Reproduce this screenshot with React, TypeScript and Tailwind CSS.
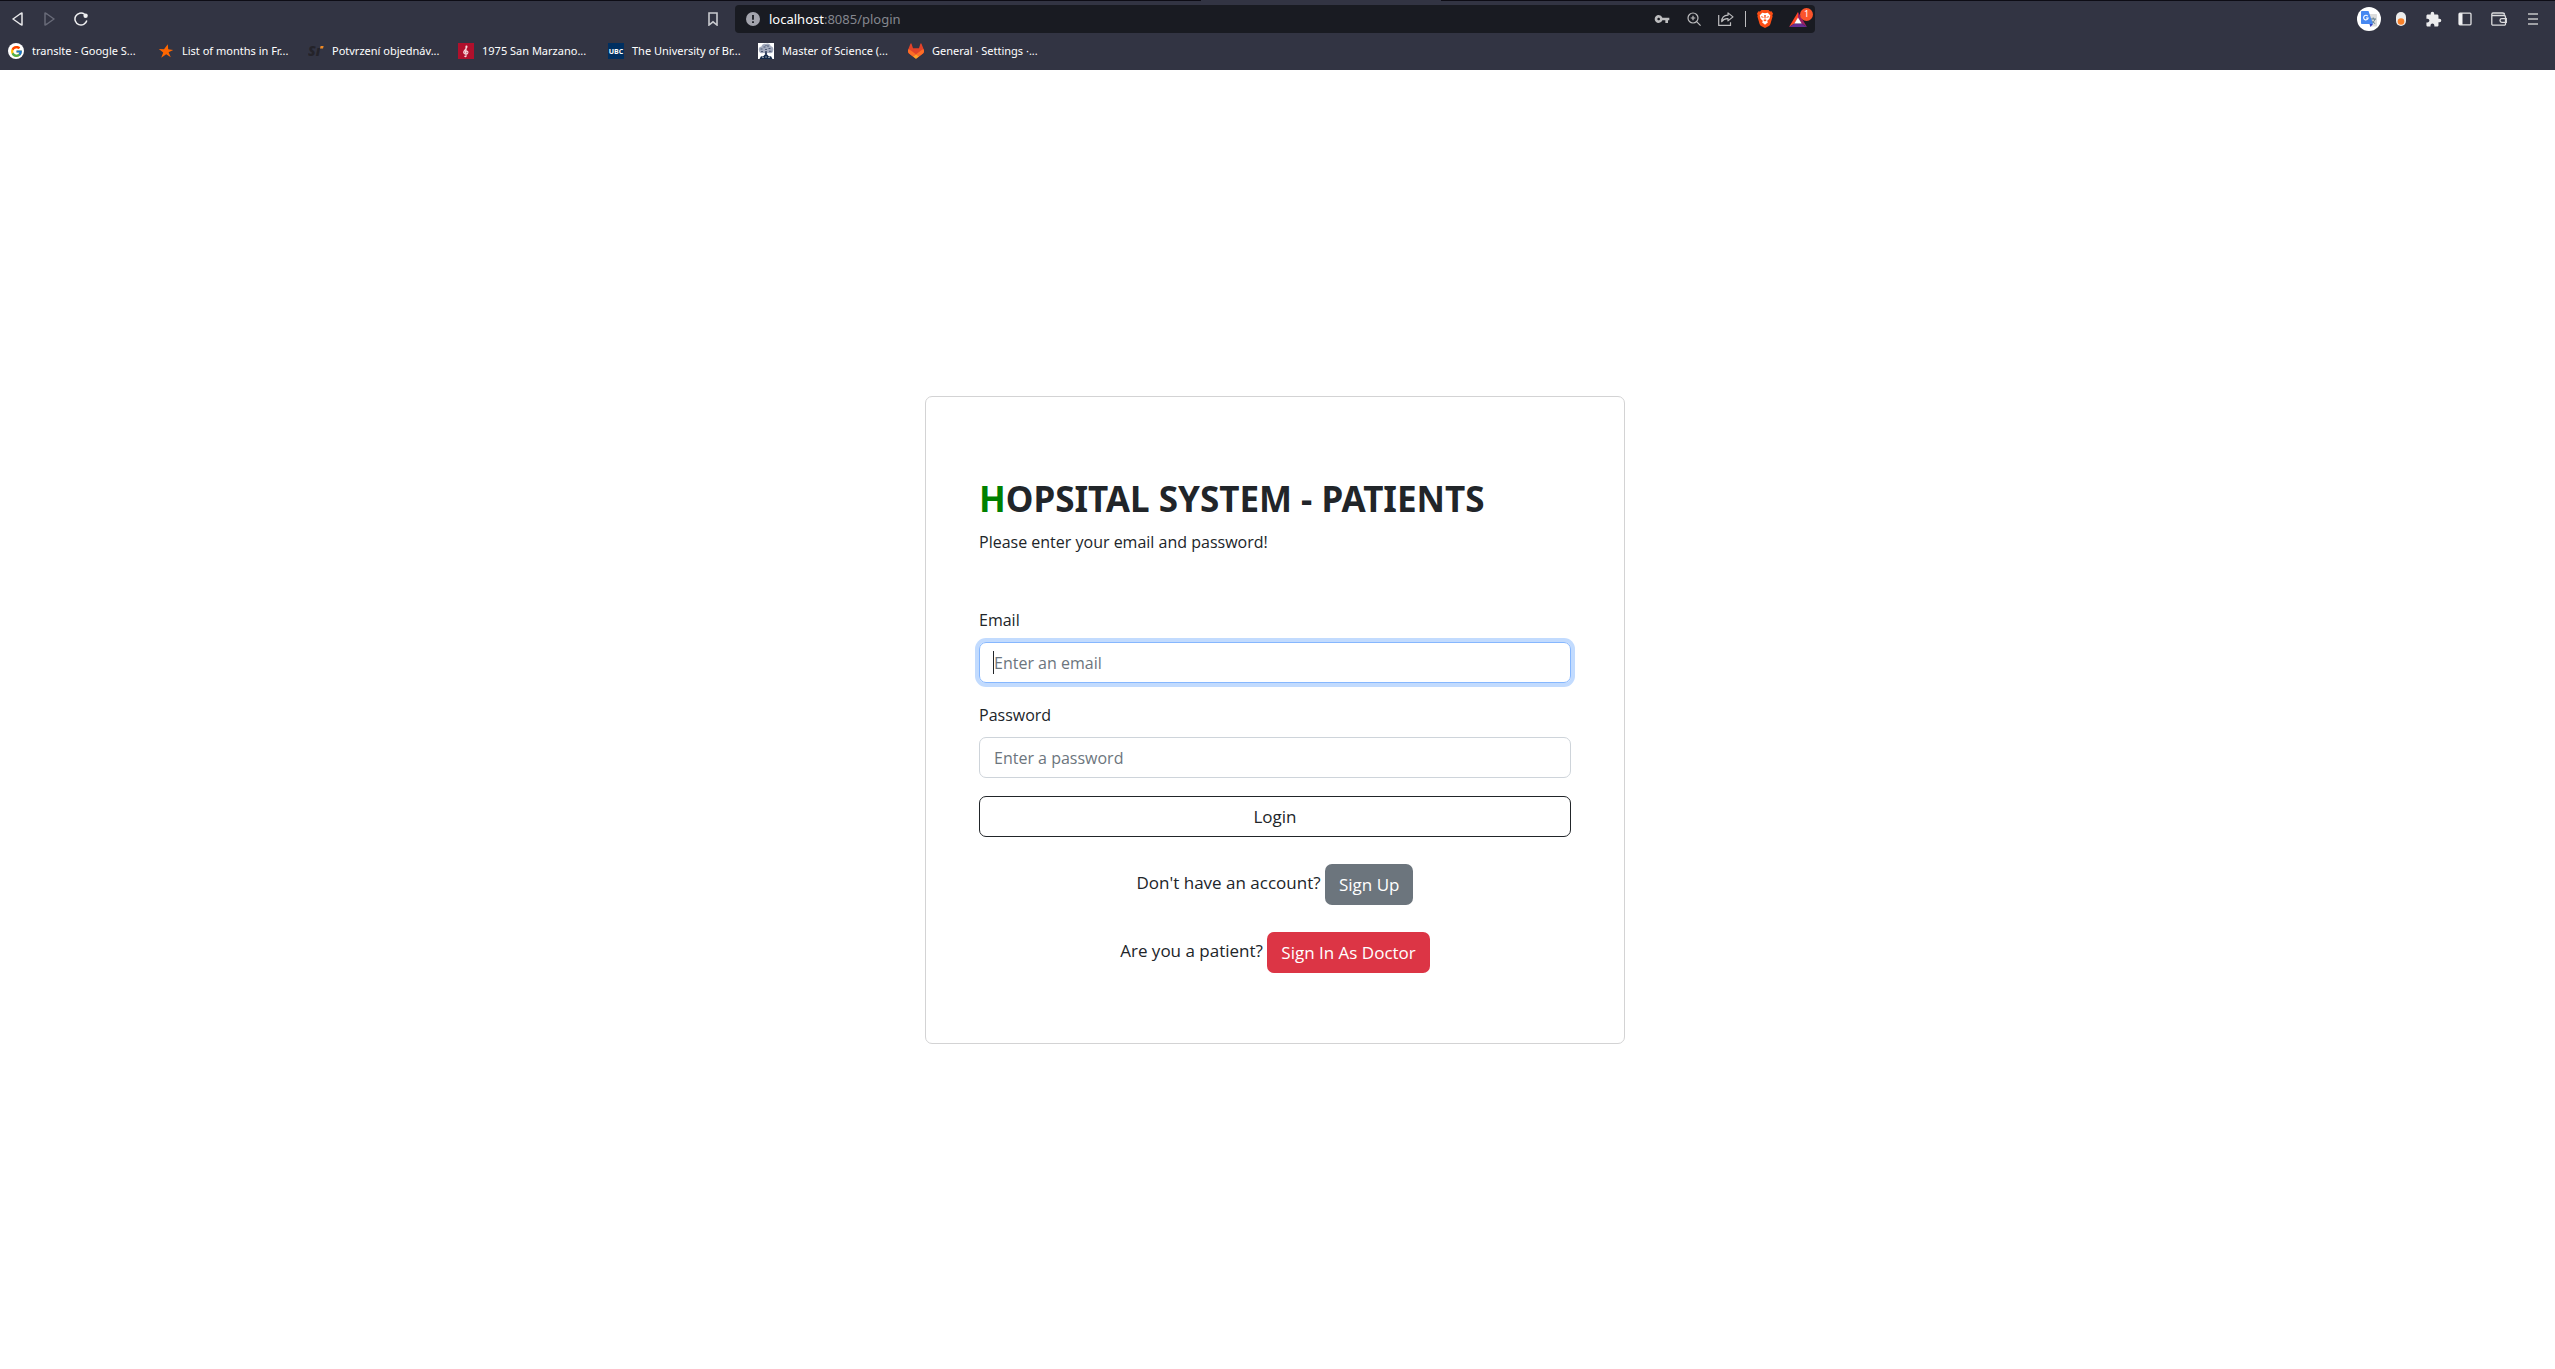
import React from "react";
import { FcGoogle } from "react-icons/fc";
import { MdExtension, MdVpnKey } from "react-icons/md";

function GoogleMark() {
  return (
    <span className="flex size-4 items-center justify-center rounded-full bg-white">
      <FcGoogle size={13} />
    </span>
  );
}

function StarMark() {
  return (
    <svg viewBox="0 0 16 16" className="size-4">
      <path d="M9.8 1.2l.4 5 5 .9-4.6 2.1 2.2 5-4.6-3-5 3.6 2-5.3L.8 6l5.2.2z" fill="#f60" />
    </svg>
  );
}

function SiMark() {
  return (
    <svg viewBox="0 0 16 16" className="size-4">
      <text x="0" y="13" fontFamily="Open Sans, sans-serif" fontSize="14" fontWeight="800" fontStyle="italic" fill="#24232a">
        Sı
      </text>
      <path d="M12.6 3h3l-.6 2.4h-3z" fill="#f08a24" />
    </svg>
  );
}

function ClefMark() {
  return (
    <svg viewBox="0 0 16 16" className="size-4">
      <rect width="16" height="16" fill="#b0102c" />
      <path
        d="M8 13.5V3.2c1-.8 1.4.8.4 2L6.2 7.8c-1.2 1.5-.4 3.4 1.8 3.4 2.2 0 2.7-2.9.6-3.2-1.6-.2-2 1.6-.8 2M8.200 13c-.3 1-1.6.8-1.5-.1"
        fill="none"
        stroke="#f6d9dd"
        strokeWidth="1.1"
      />
    </svg>
  );
}

function UbcMark() {
  return (
    <svg viewBox="0 0 16 16" className="size-4">
      <rect width="16" height="16" fill="#002f60" />
      <text x="8" y="11" textAnchor="middle" fontFamily="Open Sans, sans-serif" fontSize="7" fontWeight="700" fill="#fff">
        UBC
      </text>
    </svg>
  );
}

function TreeMark() {
  return (
    <svg viewBox="0 0 16 16" className="size-4">
      <rect width="16" height="16" fill="#fff" />
      <path d="M1 7.5C0 5 2 3.5 3.5 3.5 4 1 6.5.2 8 1c2-1 4.5 0 4.7 2.3C15 3.5 16 6 15 8c0 2-2.5 2.5-4 2H5c-2 .8-4-.5-4-2.5z" fill="#a3aabd" />
      <path d="M2.5 6h2M5.5 4h2M9 3h2M10.5 5.5h2M7 6.5h2M3 8.5h2M11 8.3h2.5M8 2v1" stroke="#4b5874" />
      <path d="M7.3 8h1.4l.6 4.5H6.700z" fill="#33415f" />
      <path d="M1.5 16L3 13.2l2 .3L6.5 12h3l1.5 1.5 2-.3 1.5 2.8z" fill="#122848" />
      <path d="M4.5 14.5h1M7.5 14h1M10.5 14.5h1" stroke="#fff" />
    </svg>
  );
}

function GitlabMark() {
  return (
    <svg viewBox="0 0 25 24" className="size-4">
      <path
        d="M24.507 9.5l-.034-.09L21.082.562a.896.896 0 0 0-1.694.091l-2.29 7.01H7.825L5.535.653a.898.898 0 0 0-1.694-.09L.451 9.411.416 9.5a6.297 6.297 0 0 0 2.09 7.278l.012.01.03.022 5.16 3.867 2.56 1.935 1.554 1.176a1.051 1.051 0 0 0 1.268 0l1.555-1.176 2.56-1.935 5.197-3.89.014-.01A6.297 6.297 0 0 0 24.507 9.5z"
        fill="#E24329"
      />
      <path
        d="M24.507 9.5l-.034-.09a11.44 11.44 0 0 0-4.56 2.051l-7.447 5.632 4.742 3.584 5.197-3.89.014-.01A6.297 6.297 0 0 0 24.507 9.5z"
        fill="#FC6D26"
      />
      <path
        d="M7.707 20.677l2.56 1.935 1.555 1.176a1.051 1.051 0 0 0 1.268 0l1.555-1.176 2.56-1.935-4.743-3.584-4.755 3.584z"
        fill="#FCA326"
      />
      <path
        d="M5.01 11.461a11.43 11.43 0 0 0-4.56-2.05L.416 9.5a6.297 6.297 0 0 0 2.09 7.278l.012.01.03.022 5.16 3.867 4.745-3.584-7.444-5.632z"
        fill="#FC6D26"
      />
    </svg>
  );
}

const bookmarks = [
  { label: "translte - Google S...", icon: <GoogleMark /> },
  { label: "List of months in Fr...", icon: <StarMark /> },
  { label: "Potvrzení objednáv...", icon: <SiMark /> },
  { label: "1975 San Marzano...", icon: <ClefMark /> },
  { label: "The University of Br...", icon: <UbcMark /> },
  { label: "Master of Science (...", icon: <TreeMark /> },
  { label: "General · Settings ·...", icon: <GitlabMark /> },
];

function Toolbar() {
  return (
    <div className="grid grid-cols-[1fr_minmax(0,1080px)_1fr] items-center pt-1 pr-[17px] pl-3">
      <div className="flex items-center">
        <button aria-label="Back" className="mr-[21px]">
          <svg viewBox="0 0 11 14" className="h-[14px] w-[11px]" fill="none" stroke="#e8e8ea" strokeWidth="1.5" strokeLinejoin="round">
            <path d="M10 1v12L8 12 1 7l7-5z" />
          </svg>
        </button>
        <button aria-label="Forward" className="mr-[19px]">
          <svg viewBox="0 0 11 14" className="h-[14px] w-[11px]" fill="none" stroke="#686a78" strokeWidth="1.5" strokeLinejoin="round">
            <path d="M1 1v12l2-1 7-5-7-5z" />
          </svg>
        </button>
        <button aria-label="Reload">
          <svg viewBox="0 0 14 14" className="size-[14px]" fill="none" stroke="#f0f0f2" strokeWidth="1.5">
            <path d="M12.8 8.5A6 6 0 1 1 10.5 2.2" />
            <circle cx="11.6" cy="3.7" r="2.2" fill="#f0f0f2" stroke="none" />
          </svg>
        </button>
        <button aria-label="Bookmark this tab" className="mr-[17px] ml-auto">
          <svg viewBox="0 0 10 14" className="h-[14px] w-[10px]" fill="none" stroke="#c9cacf" strokeWidth="1.6">
            <path d="M1 1h8v12L5 9.8 1 13z" />
          </svg>
        </button>
      </div>

      <div className="flex h-7 items-center rounded bg-[#191b22] pr-2 pl-[11px]">
        <svg viewBox="0 0 14 14" className="mr-[9px] size-[14px] shrink-0">
          <circle cx="7" cy="7" r="7" fill="#a3a4ad" />
          <path d="M7 3v4.8M7 9.2V11" stroke="#191b22" strokeWidth="1.8" />
        </svg>
        <div className="flex-1 text-[13px] leading-5 text-[#85878f]">
          <span className="text-white">localhost</span>:8085/plogin
        </div>
        <button aria-label="Passwords" className="text-[#bdbdbf]">
          <MdVpnKey size={16} />
        </button>
        <button aria-label="Zoom" className="ml-[17px]">
          <svg viewBox="0 0 14 14" className="size-[14px]" fill="none" stroke="#bdbdbf" strokeWidth="1.2">
            <circle cx="6" cy="6" r="5" />
            <path d="M9.6 9.6l4 4M3.7 6h4.6M6 3.7v4.6" />
          </svg>
        </button>
        <button aria-label="Share" className="ml-[17px]">
          <svg viewBox="0 0 16 14" className="h-[14px] w-4" fill="none" stroke="#bdbdbf" strokeWidth="1.2">
            <path d="M.7 3v10.3h11.8v-3" />
            <path d="M10 .9l5 4-5 4V6.7C7 6.5 5.2 7.5 3.7 9.7 3.7 6 6 3.4 10 3.2z" strokeLinejoin="round" />
          </svg>
        </button>
        <span className="mx-[11px] h-4 w-px bg-[#bdbdbf]" />
        <button aria-label="Brave Shields">
          <svg viewBox="0 0 16 18" className="h-[18px] w-4">
            <path d="M4.5 0h7L13 1.5l1.500-.2L16 3.5l-.7 2 .3 1-2.2 7.5c-.3 1-.8 1.5-1.5 2L8 18l-3.900-2c-.7-.5-1.2-1-1.500-2L.4 6.5l.3-1L0 3.5l1.5-2.200 1.500.2z" fill="#fb4d14" />
            <path d="M5.2 2.8L8 3.3l2.800-.5 2.500 2.700-.9 3.2L10 11l1 1.2-3 2.600-3-2.600L6 11 3.600 8.700l-.9-3.200z" fill="#fff" />
            <path d="M4.3 6l2.500 1.200-.5.6-2-.6zM11.7 6L9.200 7.200l.5.6 2-.6zM7.200 5h1.600l-.3 3.500h-1zM6.200 10l1.800-.8 1.800.8L8 11.500z" fill="#fb4d14" />
          </svg>
        </button>
        <button aria-label="Brave Rewards" className="relative ml-4 flex w-[18px] items-center">
          <svg viewBox="0 0 18 15" className="h-[15px] w-[18px]">
            <path d="M9 0v6l-3.500 5.500L0 15z" fill="#ff4724" />
            <path d="M9 0l9 15-5.500-3.500L9 6z" fill="#9e1f63" />
            <path d="M0 15l5.500-3.500h7L18 15z" fill="#662d91" />
            <path d="M9 5.500l3.700 6H5.300z" fill="#fff" />
          </svg>
          <span className="absolute -top-1 -right-[6px] flex size-[13px] items-center justify-center rounded-full bg-[#fb542b] text-[9px] leading-3 text-white">
            1
          </span>
        </button>
      </div>

      <div className="flex items-center justify-end">
        <button aria-label="Google Translate" className="flex size-6 items-center justify-center rounded-full bg-white">
          <svg viewBox="0 0 16 16" className="size-4">
            <path d="M6 3h9.3a.7.7 0 0 1 .7.7v11a.7.7 0 0 1-.7.7H9.500z" fill="#dcdcdc" />
            <path d="M9.5 8H15M12.2 6.5V8M14 8c-.5 2.2-2 3.500-4 4.500M10.7 9.500c.8 1.5 2 2.500 3.500 3" stroke="#607d8b" fill="none" />
            <path d="M8.5 13H12l-2.500 3z" fill="#3340c4" />
            <path d="M.8 0h6.700L12 13H.8a.8.8 0 0 1-.8-.8V.8A.8.8 0 0 1 .8 0z" fill="#4688f1" />
            <path d="M6.8 5.2A2.3 2.3 0 1 0 7.2 7H5" stroke="#fff" strokeWidth="1.1" fill="none" />
          </svg>
        </button>
        <button aria-label="Toggle extension" className="ml-[15px]">
          <svg viewBox="0 0 10 14" className="h-[14px] w-[10px]">
            <rect width="10" height="14" rx="5" fill="#ececec" />
            <circle cx="5" cy="9.5" r="3.3" fill="#f9812a" />
          </svg>
        </button>
        <button aria-label="Extensions" className="ml-[19px] text-[#ececee]">
          <MdExtension size={17} />
        </button>
        <button aria-label="Sidebar" className="ml-4">
          <svg viewBox="0 0 14 14" className="size-[14px]">
            <rect x="1" y="1.2" width="12" height="11.6" rx="1" fill="none" stroke="#e0e0e2" strokeWidth="1.3" />
            <rect x="1" y="1.2" width="3.5" height="11.6" fill="#f0f0f2" />
          </svg>
        </button>
        <button aria-label="Wallet" className="ml-[19px]">
          <svg viewBox="0 0 16 14" className="h-[14px] w-4" fill="none" stroke="#dcdcde" strokeWidth="1.3">
            <path d="M14.5 4.5V12a1.2 1.2 0 0 1-1.2 1.2H2A1.2 1.2 0 0 1 .8 12V2.2A1.3 1.3 0 0 1 2 1h9.5c1.2 0 2 .8 2 1.7M.8 3.500H13c1 0 1.500.6 1.500 1.500" />
            <path d="M15.3 6.7h-4.500a1.8 1.8 0 0 0 0 3.6h4.500z" />
          </svg>
        </button>
        <button aria-label="Menu" className="ml-[21px]">
          <svg viewBox="0 0 10 12" className="h-3 w-[10px]" stroke="#c4c4c6" strokeWidth="1.5">
            <path d="M0 1h10M0 6h10M0 11h10" />
          </svg>
        </button>
      </div>
    </div>
  );
}

export default function App() {
  return (
    <div className="flex min-h-screen flex-col bg-white font-['Noto_Sans',sans-serif] text-[#212529]">
      <header className="h-[70px] bg-[#323443]">
        <div className="flex h-px bg-[#0d0c15]">
          <span className="ml-[47%] w-[240px] bg-[#323443]" />
        </div>
        <Toolbar />
        <nav className="mt-[10px] flex pl-2">
          {bookmarks.map(({ label, icon }) => (
            <a key={label} href="#" className="flex w-[150px] items-center gap-2 text-[11px] leading-4 whitespace-nowrap text-white">
              <span className="shrink-0">{icon}</span>
              {label}
            </a>
          ))}
        </nav>
      </header>

      <main className="flex flex-1 items-center justify-center pt-px pr-[5px] font-['Open_Sans',sans-serif] text-base leading-[26px]">
        <form className="w-full max-w-[700px] rounded-[7px] border border-[#d3d3d4] px-[53px] pt-[81px] pb-[70px]">
          <h1 className="mb-[9px] font-['Noto_Sans',sans-serif] text-[35px] leading-[42px] font-bold">
            <span className="text-[#008000]">H</span>OPSITAL SYSTEM - PATIENTS
          </h1>
          <p className="mb-[52px]">Please enter your email and password!</p>

          <label htmlFor="email" className="mb-[9px] block">
            Email
          </label>
          <div className="relative mb-[19px]">
            <input
              id="email"
              type="email"
              placeholder="Enter an email"
              className="block h-[41px] w-full rounded-[7px] border border-[#86b7fe] px-[14px] ring-4 ring-[#c2dbfe] outline-none placeholder:text-[#6c757d]"
            />
            <span className="absolute inset-y-[9px] left-[14px] w-px bg-[#212529]" />
          </div>
          <label htmlFor="password" className="mb-[9px] block">
            Password
          </label>
          <input
            id="password"
            type="password"
            placeholder="Enter a password"
            className="mb-[18px] block h-[41px] w-full rounded-[7px] border border-[#ced4da] px-[14px] outline-none placeholder:text-[#6c757d]"
          />
          <button type="button" className="mb-[27px] block h-[41px] w-full rounded-[7px] border border-[#212529] text-[17px]">
            Login
          </button>
          <p className="mb-[27px] text-center text-[17px]">
            Don't have an account?{" "}
            <button type="button" className="h-[41px] rounded-[7px] bg-[#6c757d] px-[14px] align-middle text-white">
              Sign Up
            </button>
          </p>
          <p className="text-center text-[17px]">
            Are you a patient?{" "}
            <button type="button" className="h-[41px] rounded-[7px] bg-[#dc3545] px-[14px] align-middle text-white">
              Sign In As Doctor
            </button>
          </p>
        </form>
      </main>
    </div>
  );
}
